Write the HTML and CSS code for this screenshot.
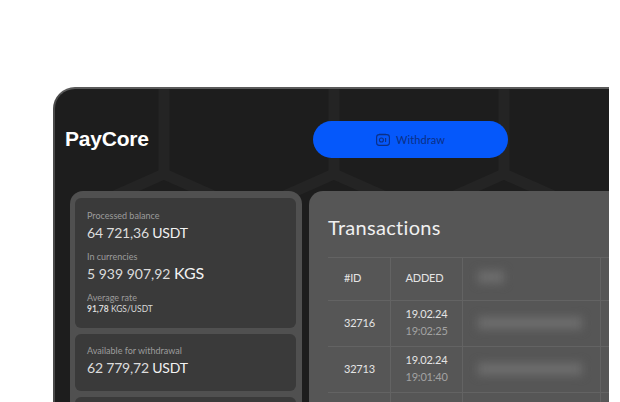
FILE: index.html
```html
<!DOCTYPE html>
<html lang="en">
<head>
    <meta charset="UTF-8">
    <meta name="viewport" content="width=device-width, initial-scale=1.0">
    <title>PayCore</title>
    <link rel="stylesheet" href="styles.css">
</head>
<body>
    <div class="frame">
        <svg class="hexes" width="556" height="315" viewBox="0 0 556 315" fill="none">
            <path d="M111 0V87L41 118M111 87L181 118M281 0V87L211 118M281 87L351 118M451 0V87L381 118M451 87L521 118" stroke="#242424" stroke-width="11"/>
        </svg>
        <header class="top">
            <div class="logo">PayCore</div>
            <button class="withdraw" type="button">
                <svg width="14" height="13" viewBox="0 0 14 13" fill="none" stroke="#0b2f86" stroke-width="1.1">
                    <rect x="0.6" y="1.6" width="12.8" height="10.8" rx="2.6"/>
                    <circle cx="5.4" cy="7" r="2"/>
                    <path d="M9.6 5V9M3 1.4L10 1.4"/>
                </svg>
                Withdraw
            </button>
        </header>
        <div class="columns">
            <aside class="side">
                <section class="card card-main">
                    <div class="label">Processed balance</div>
                    <div class="amount">64 721,36 <b>USDT</b></div>
                    <div class="label">In currencies</div>
                    <div class="amount amount-big">5 939 907,92 <b>KGS</b></div>
                    <div class="label">Average rate</div>
                    <div class="rate"><b>91,78</b> KGS/USDT</div>
                </section>
                <section class="card">
                    <div class="label">Available for withdrawal</div>
                    <div class="amount">62 779,72 <b>USDT</b></div>
                </section>
                <section class="card"></section>
            </aside>
            <main class="panel">
                <h1>Transactions</h1>
                <table>
                    <colgroup>
                        <col class="col-id"><col class="col-added"><col class="col-hidden"><col>
                    </colgroup>
                    <thead>
                        <tr>
                            <th>#ID</th>
                            <th>ADDED</th>
                            <th><span class="smudge smudge-short"></span></th>
                            <th></th>
                        </tr>
                    </thead>
                    <tbody>
                        <tr>
                            <td>32716</td>
                            <td class="when">19.02.24<small>19:02:25</small></td>
                            <td><span class="smudge"></span></td>
                            <td></td>
                        </tr>
                        <tr>
                            <td>32713</td>
                            <td class="when">19.02.24<small>19:01:40</small></td>
                            <td><span class="smudge"></span></td>
                            <td></td>
                        </tr>
                        <tr>
                            <td></td>
                            <td></td>
                            <td></td>
                            <td></td>
                        </tr>
                    </tbody>
                </table>
            </main>
        </div>
    </div>
</body>
</html>
```

FILE: styles.css
```css
html, body {
    height: 402px;
    overflow: hidden;
}
body {
    margin: 0;
    background-color: #fff;
    font-family: Lato, "Noto Sans", sans-serif;
}
.frame {
    position: relative;
    box-sizing: border-box;
    width: 556px;
    height: 315px;
    margin: 87px 0 0 53px;
    overflow: hidden;
    background-color: #1d1d1d;
    border-top: 2px solid #5a5a5a;
    border-left: 2px solid #4a4a4a;
    border-radius: 22px 0 0 0;
}
.hexes {
    position: absolute;
    top: -2px;
    left: -2px;
}
.top {
    position: relative;
    display: flex;
    align-items: center;
    height: 37px;
    padding: 32px 0 33px 10px;
}
.logo {
    width: 248px;
    margin-top: -1px;
    color: #fff;
    font-family: "Liberation Sans", Arial, sans-serif;
    font-size: 21px;
    font-weight: bold;
    letter-spacing: -0.2px;
}
.withdraw {
    display: flex;
    align-items: center;
    justify-content: center;
    gap: 6px;
    width: 195px;
    height: 37px;
    padding: 0;
    background-color: #0558fb;
    color: #0b2f86;
    border: none;
    border-radius: 19px;
    font-family: inherit;
    font-size: 11px;
    letter-spacing: 0.1px;
}
.columns {
    position: relative;
    display: flex;
    gap: 7px;
    padding-left: 15px;
}
.side {
    display: flex;
    flex-direction: column;
    flex: none;
    gap: 6px;
    box-sizing: border-box;
    width: 232px;
    height: 240px;
    padding: 7px 6px 0 5px;
    background-color: #505050;
    border-radius: 13px 13px 0 0;
}
.card {
    box-sizing: border-box;
    min-height: 57px;
    padding: 11px 12px;
    background-color: #3a3a3a;
    border-radius: 6px;
}
.card-main {
    height: 130px;
    flex: none;
    padding-top: 12px;
}
.label {
    color: #9c9c9c;
    font-size: 9px;
    line-height: 11px;
}
.amount {
    height: 18px;
    margin: 3px 0 9px;
    color: #dcdcdc;
    font-size: 14px;
    line-height: 18px;
    letter-spacing: -0.2px;
}
.amount b {
    color: #f2f2f2;
    font-weight: 400;
}
.amount-big {
    margin-top: 2px;
    margin-bottom: 10px;
    letter-spacing: 0;
}
.amount-big b {
    font-size: 16px;
}
.rate {
    margin-top: 0;
    color: #d8d8d8;
    font-size: 8.5px;
    line-height: 12px;
}
.panel {
    flex: 1;
    height: 240px;
    padding: 0 0 0 19px;
    overflow: hidden;
    background-color: #565656;
    border-radius: 14px 0 0 0;
}
h1 {
    margin: 0;
    padding: 22px 0 16px;
    color: #f0f0f0;
    font-size: 20px;
    font-weight: 400;
    line-height: 28px;
    letter-spacing: 0.3px;
}
table {
    width: 300px;
    table-layout: fixed;
    border-collapse: collapse;
    border-top: 1px solid #636363;
}
.col-id {
    width: 62px;
}
.col-added {
    width: 72px;
}
.col-hidden {
    width: 138px;
}
th, td {
    box-sizing: border-box;
    padding: 0 0 2px 15px;
    border: 1px solid #636363;
    border-top: none;
    border-left: none;
    color: #e4e4e4;
    font-size: 11px;
    font-weight: 400;
    text-align: left;
    letter-spacing: -0.2px;
}
th:first-child, td:first-child {
    padding-left: 16px;
}
th {
    height: 43px;
    padding-bottom: 4px;
}
td {
    height: 46px;
}
th:last-child, td:last-child {
    border-right: none;
}
.when {
    line-height: 16px;
}
.when small {
    display: block;
    margin-top: 1px;
    color: #a2a2a2;
    font-size: 11px;
}
.smudge {
    display: block;
    width: 104px;
    height: 12px;
    background-color: #6e6e6e;
    filter: blur(5px);
}
.smudge-short {
    width: 26px;
}
```
